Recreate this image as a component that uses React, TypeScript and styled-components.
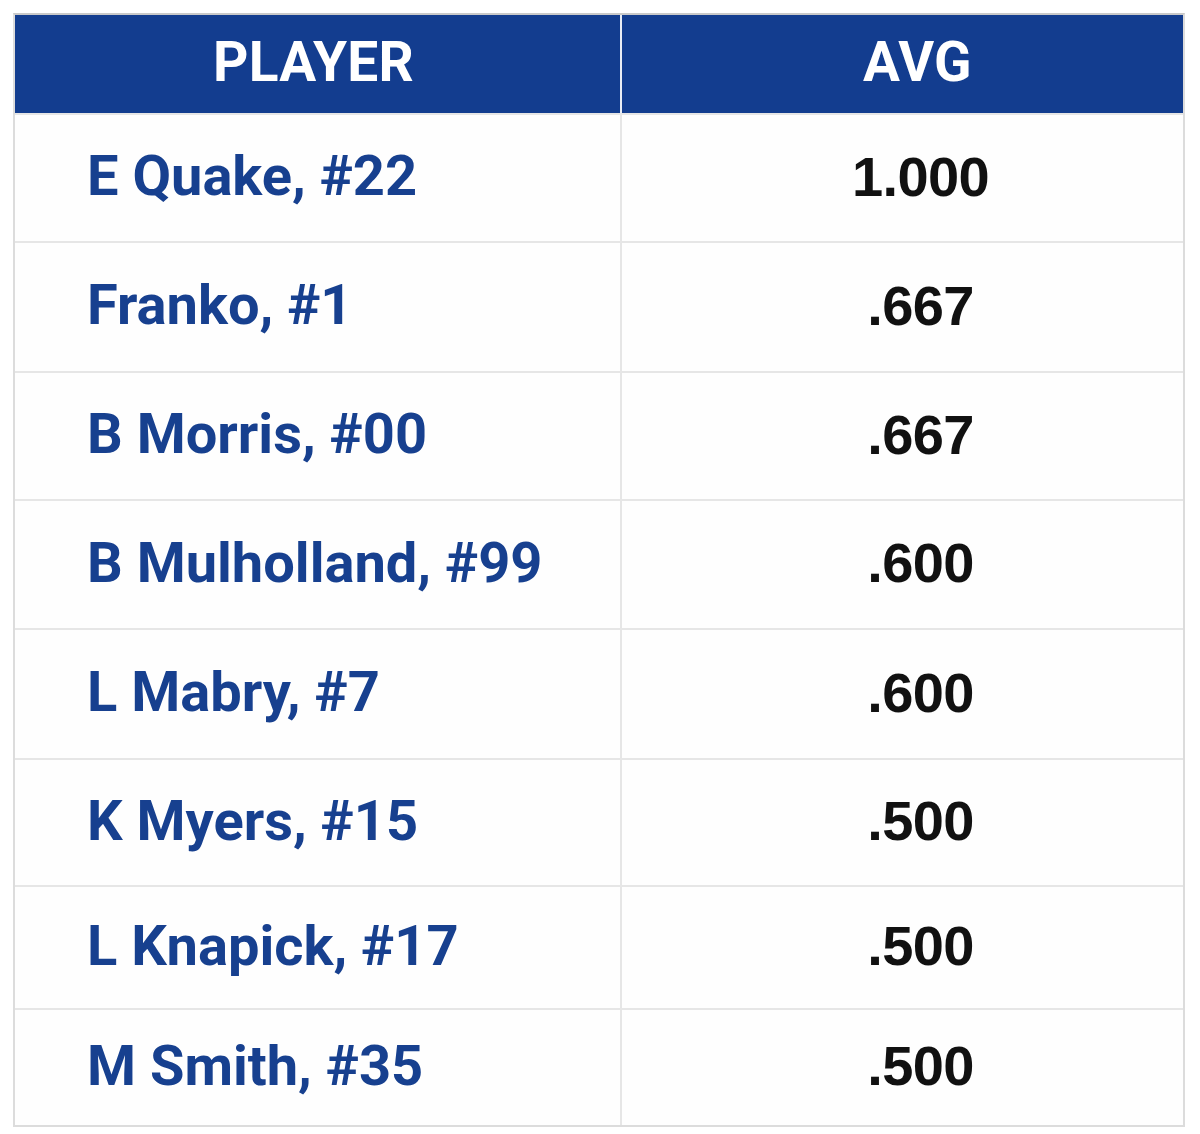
import React from "react";
import styled, { createGlobalStyle } from "styled-components";

const Global = createGlobalStyle`
  html, body { margin: 0; padding: 0; background: #ffffff; }
  body { font-family: Roboto, "Liberation Sans", sans-serif; }
`;

const Page = styled.div`
  width: 1200px;
  height: 1134px;
  padding: 13px 0 0 13px;
  box-sizing: border-box;
  background: #ffffff;
`;

const Table = styled.div`
  width: 1172px;
  border: 2px solid #dcdcdc;
  border-top-color: #c9c9c9;
  box-sizing: border-box;
  display: grid;
  grid-template-columns: 607px 1fr;
  background: #fefefe;
`;

const HeadCell = styled.div<{ $first?: boolean; $shift?: number }>`
  height: 98px;
  background: #133d8f;
  color: #ffffff;
  font-family: Roboto, "Liberation Sans", sans-serif;
  font-weight: 700;
  font-size: 55px;
  letter-spacing: 0.3px;
  display: flex;
  align-items: center;
  justify-content: center;
  padding-left: ${(p) => p.$shift ?? 0}px;
  padding-right: ${(p) => (p.$first ? 8 : 0)}px;
  padding-bottom: 4px;
  box-sizing: border-box;
  border-right: ${(p) => (p.$first ? "2px solid #e9edf5" : "none")};
`;

const NameCell = styled.div<{ $h: number }>`
  height: ${(p) => p.$h}px;
  box-sizing: border-box;
  display: flex;
  align-items: center;
  padding-left: 72px;
  padding-bottom: 4px;
  border-top: 2px solid #e6e6e6;
  border-right: 2px solid #e6e6e6;
  color: #17408f;
  font-family: Roboto, "Liberation Sans", sans-serif;
  font-weight: 700;
  font-size: 56px;
`;

const AvgCell = styled.div<{ $h: number }>`
  height: ${(p) => p.$h}px;
  box-sizing: border-box;
  display: flex;
  align-items: center;
  justify-content: center;
  padding-left: 36px;
  padding-bottom: 4px;
  border-top: 2px solid #e6e6e6;
  color: #111111;
  font-family: "Liberation Sans", Arial, sans-serif;
  font-weight: 700;
  font-size: 56px;
  letter-spacing: -0.6px;
`;

const rows: [string, string, number][] = [
  ["E Quake, #22", "1.000", 128],
  ["Franko, #1", ".667", 130],
  ["B Morris, #00", ".667", 128],
  ["B Mulholland, #99", ".600", 129],
  ["L Mabry, #7", ".600", 130],
  ["K Myers, #15", ".500", 127],
  ["L Knapick, #17", ".500", 123],
  ["M Smith, #35", ".500", 117],
];

export default function App() {
  return (
    <>
      <Global />
      <Page>
        <Table>
          <HeadCell $first>PLAYER</HeadCell>
          <HeadCell $shift={30}>AVG</HeadCell>
          {rows.map(([name, avg, h]) => (
            <React.Fragment key={name}>
              <NameCell $h={h}>{name}</NameCell>
              <AvgCell $h={h}>{avg}</AvgCell>
            </React.Fragment>
          ))}
        </Table>
      </Page>
    </>
  );
}
